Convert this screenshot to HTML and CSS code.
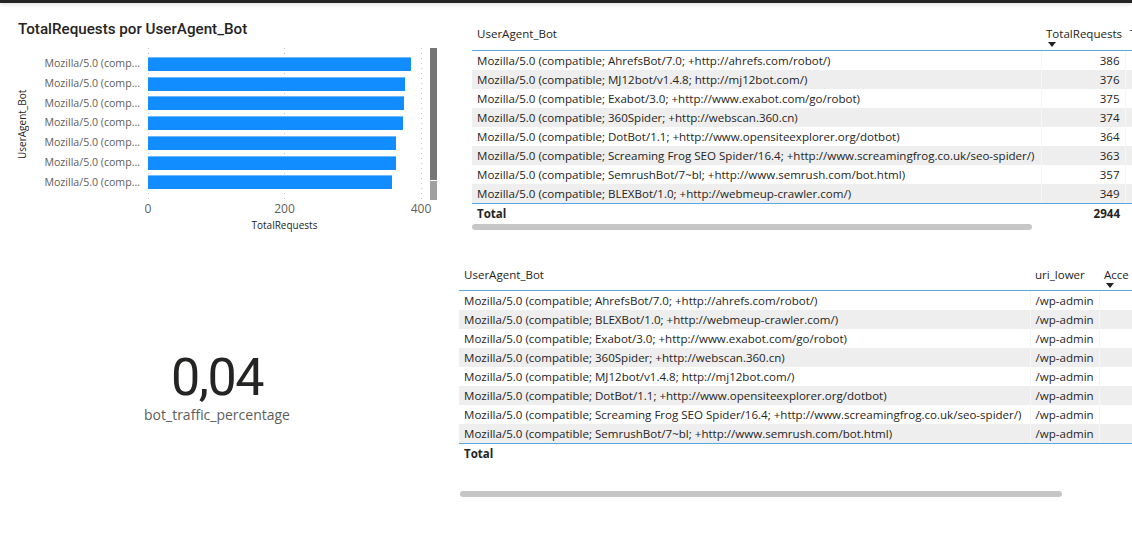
FILE: index.html
```html
<!DOCTYPE html>
<html lang="es">
<head>
<meta charset="utf-8">
<title>Bots</title>
<link rel="stylesheet" href="styles.css">
</head>
<body>
<div class="topbar"></div>
<div class="page">
  <div class="left">
    <section class="chart">
      <h2 class="chart-title">TotalRequests por UserAgent_Bot</h2>
      <div class="chart-body">
        <div class="ytitle">UserAgent_Bot</div>
        <div class="labels">
          <div class="lab">Mozilla/5.0 (comp...</div>
          <div class="lab">Mozilla/5.0 (comp...</div>
          <div class="lab">Mozilla/5.0 (comp...</div>
          <div class="lab">Mozilla/5.0 (comp...</div>
          <div class="lab">Mozilla/5.0 (comp...</div>
          <div class="lab">Mozilla/5.0 (comp...</div>
          <div class="lab">Mozilla/5.0 (comp...</div>
        </div>
        <div class="plot">
          <div class="row"><div class="bar" style="width:263.4px"></div></div>
          <div class="row"><div class="bar" style="width:256.6px"></div></div>
          <div class="row"><div class="bar" style="width:255.9px"></div></div>
          <div class="row"><div class="bar" style="width:255.3px"></div></div>
          <div class="row"><div class="bar" style="width:248.4px"></div></div>
          <div class="row"><div class="bar" style="width:247.7px"></div></div>
          <div class="row"><div class="bar" style="width:243.7px"></div></div>
        </div>
        <div class="vscroll"><div class="vthumb"></div><div class="vrest"></div></div>
      </div>
      <div class="xaxis">
        <span class="tick"><span>0</span></span>
        <span class="tick"><span>200</span></span>
        <span class="tick"><span>400</span></span>
      </div>
      <div class="xtitle">TotalRequests</div>
    </section>
    <section class="card">
      <div class="card-value">0,04</div>
      <div class="card-label">bot_traffic_percentage</div>
    </section>
  </div>
  <div class="right">
    <section class="tbl tbl-top">
      <table>
        <colgroup><col class="c1"><col class="c2"><col class="c3"></colgroup>
        <thead>
          <tr>
            <th>UserAgent_Bot</th>
            <th class="num-h">TotalRequests<span class="sort"></span></th>
            <th>T</th>
          </tr>
        </thead>
        <tbody>
          <tr><td>Mozilla/5.0 (compatible; AhrefsBot/7.0; +http://ahrefs.com/robot/)</td><td class="num">386</td><td></td></tr>
          <tr><td>Mozilla/5.0 (compatible; MJ12bot/v1.4.8; http://mj12bot.com/)</td><td class="num">376</td><td></td></tr>
          <tr><td>Mozilla/5.0 (compatible; Exabot/3.0; +http://www.exabot.com/go/robot)</td><td class="num">375</td><td></td></tr>
          <tr><td>Mozilla/5.0 (compatible; 360Spider; +http://webscan.360.cn)</td><td class="num">374</td><td></td></tr>
          <tr><td>Mozilla/5.0 (compatible; DotBot/1.1; +http://www.opensiteexplorer.org/dotbot)</td><td class="num">364</td><td></td></tr>
          <tr><td>Mozilla/5.0 (compatible; Screaming Frog SEO Spider/16.4; +http://www.screamingfrog.co.uk/seo-spider/)</td><td class="num">363</td><td></td></tr>
          <tr><td>Mozilla/5.0 (compatible; SemrushBot/7~bl; +http://www.semrush.com/bot.html)</td><td class="num">357</td><td></td></tr>
          <tr><td>Mozilla/5.0 (compatible; BLEXBot/1.0; +http://webmeup-crawler.com/)</td><td class="num">349</td><td></td></tr>
        </tbody>
        <tfoot>
          <tr><td>Total</td><td class="num">2944</td><td></td></tr>
        </tfoot>
      </table>
      <div class="hscroll hscroll-top"></div>
    </section>
    <section class="tbl tbl-bottom">
      <table>
        <colgroup><col class="d1"><col class="d2"><col class="d3"></colgroup>
        <thead>
          <tr>
            <th>UserAgent_Bot</th>
            <th>uri_lower</th>
            <th class="num-h">Acce<span class="sort"></span></th>
          </tr>
        </thead>
        <tbody>
          <tr><td>Mozilla/5.0 (compatible; AhrefsBot/7.0; +http://ahrefs.com/robot/)</td><td>/wp-admin</td><td></td></tr>
          <tr><td>Mozilla/5.0 (compatible; BLEXBot/1.0; +http://webmeup-crawler.com/)</td><td>/wp-admin</td><td></td></tr>
          <tr><td>Mozilla/5.0 (compatible; Exabot/3.0; +http://www.exabot.com/go/robot)</td><td>/wp-admin</td><td></td></tr>
          <tr><td>Mozilla/5.0 (compatible; 360Spider; +http://webscan.360.cn)</td><td>/wp-admin</td><td></td></tr>
          <tr><td>Mozilla/5.0 (compatible; MJ12bot/v1.4.8; http://mj12bot.com/)</td><td>/wp-admin</td><td></td></tr>
          <tr><td>Mozilla/5.0 (compatible; DotBot/1.1; +http://www.opensiteexplorer.org/dotbot)</td><td>/wp-admin</td><td></td></tr>
          <tr><td>Mozilla/5.0 (compatible; Screaming Frog SEO Spider/16.4; +http://www.screamingfrog.co.uk/seo-spider/)</td><td>/wp-admin</td><td></td></tr>
          <tr><td>Mozilla/5.0 (compatible; SemrushBot/7~bl; +http://www.semrush.com/bot.html)</td><td>/wp-admin</td><td></td></tr>
        </tbody>
        <tfoot>
          <tr><td>Total</td><td></td><td></td></tr>
        </tfoot>
      </table>
      <div class="hscroll hscroll-bottom"></div>
    </section>
  </div>
</div>
</body>
</html>
```

FILE: styles.css
```css
* { box-sizing: border-box; }
html, body { margin: 0; padding: 0; }
body {
  width: 1132px;
  height: 552px;
  overflow: hidden;
  background: #ffffff;
  color: #252423;
  font-family: "Open Sans", "Noto Sans", sans-serif;
}
.topbar {
  height: 3px;
  background: #252423;
  box-shadow: 0 1px 4px rgba(0,0,0,0.18);
}
.page {
  display: grid;
  grid-template-columns: 450px 682px;
}
.left { display: flex; flex-direction: column; }

/* chart */
.chart { padding: 16px 0 0 0; }
.chart-title {
  margin: 0 0 9px 18px;
  font-family: Roboto, "Noto Sans", sans-serif;
  font-weight: 500;
  font-size: 15.2px;
  line-height: 20px;
  color: #252423;
  white-space: nowrap;
}
.chart-body {
  display: flex;
  height: 152px;
  padding-left: 14px;
}
.ytitle {
  width: 16px;
  writing-mode: vertical-rl;
  transform: rotate(180deg);
  text-align: center;
  font-size: 10px;
  line-height: 16px;
  color: #252423;
  white-space: nowrap;
}
.labels {
  width: 110px;
  padding-top: 6px;
  display: flex;
  flex-direction: column;
  align-items: flex-end;
}
.lab {
  height: 19.75px;
  line-height: 19.75px;
  font-size: 10.6px;
  color: #605e5c;
  white-space: nowrap;
}
.plot {
  margin-left: 8px;
  width: 274px;
  padding-top: 6px;
  background-image:
    repeating-linear-gradient(to bottom, #c8c8c8 0 1px, transparent 1px 5px),
    repeating-linear-gradient(to bottom, #c8c8c8 0 1px, transparent 1px 5px),
    repeating-linear-gradient(to bottom, #c8c8c8 0 1px, transparent 1px 5px);
  background-size: 1px 100%;
  background-position: 0 0, 136px 0, 273px 0;
  background-repeat: no-repeat;
}
.row {
  height: 19.75px;
  display: flex;
  align-items: center;
}
.bar {
  height: 14px;
  background: #118dff;
  border-top: 1px solid #6cb8ff;
}
.vscroll {
  margin-left: 8px;
  width: 7px;
  display: flex;
  flex-direction: column;
}
.vthumb { height: 132px; background: #767676; }
.vrest { flex: 1; margin-top: 1px; background: #a0a0a0; }
.xaxis {
  display: flex;
  justify-content: space-between;
  width: 273px;
  margin-left: 148px;
  height: 18px;
  line-height: 18px;
  font-size: 12px;
  color: #605e5c;
}
.tick { width: 0; display: flex; justify-content: center; }
.tick span { white-space: nowrap; }
.xtitle {
  margin-left: 148px;
  width: 273px;
  text-align: center;
  font-size: 10px;
  line-height: 14px;
  color: #252423;
}

/* card */
.card {
  margin-top: 118px;
  width: 434px;
  text-align: center;
}
.card-value {
  font-family: Roboto, "Noto Sans", sans-serif;
  font-size: 52px;
  line-height: 55px;
  letter-spacing: -1.5px;
  color: #252423;
}
.card-label {
  font-size: 14px;
  line-height: 20px;
  color: #605e5c;
}

/* tables */
.right { display: flex; flex-direction: column; overflow: hidden; }
.tbl { overflow: hidden; }
.tbl-top { margin: 17px 0 0 22px; }
.tbl-bottom { margin: 31px 0 0 9px; }
table {
  border-collapse: collapse;
  table-layout: fixed;
  width: 700px;
  font-size: 11.55px;
  color: #252423;
}
.c1 { width: 569px; }
.c2 { width: 84px; }
.c3 { width: 47px; }
.d1 { width: 571px; }
.d2 { width: 69px; }
.d3 { width: 60px; }
th {
  height: 30px;
  padding: 6px 0 0 5px;
  text-align: left;
  vertical-align: top;
  font-weight: 400;
  line-height: 16px;
  white-space: nowrap;
  overflow: hidden;
  border-bottom: 1px solid #5aa7e6;
}
.num-h { padding-left: 5px; }
.sort {
  display: block;
  width: 0;
  height: 0;
  margin: 0 0 0 2px;
  border-left: 4px solid transparent;
  border-right: 4px solid transparent;
  border-top: 5px solid #252423;
}
td {
  height: 19px;
  line-height: 19px;
  padding: 0 0 0 5px;
  white-space: nowrap;
  overflow: hidden;
}
tbody td + td { border-left: 1px solid #f6f6f6; }
tbody tr:nth-child(even) td { background: #eeeeee; }
tbody tr:last-child td { border-bottom: 1px solid #5aa7e6; }
td.num { text-align: right; padding-right: 5px; }
tfoot td { font-weight: 700; height: 19px; }
.hscroll {
  height: 6px;
  border-radius: 3px;
  background: #c6c6c6;
}
.hscroll-top { width: 560px; margin-top: 1px; }
.hscroll-bottom { width: 602px; margin: 28px 0 0 1px; }
```
